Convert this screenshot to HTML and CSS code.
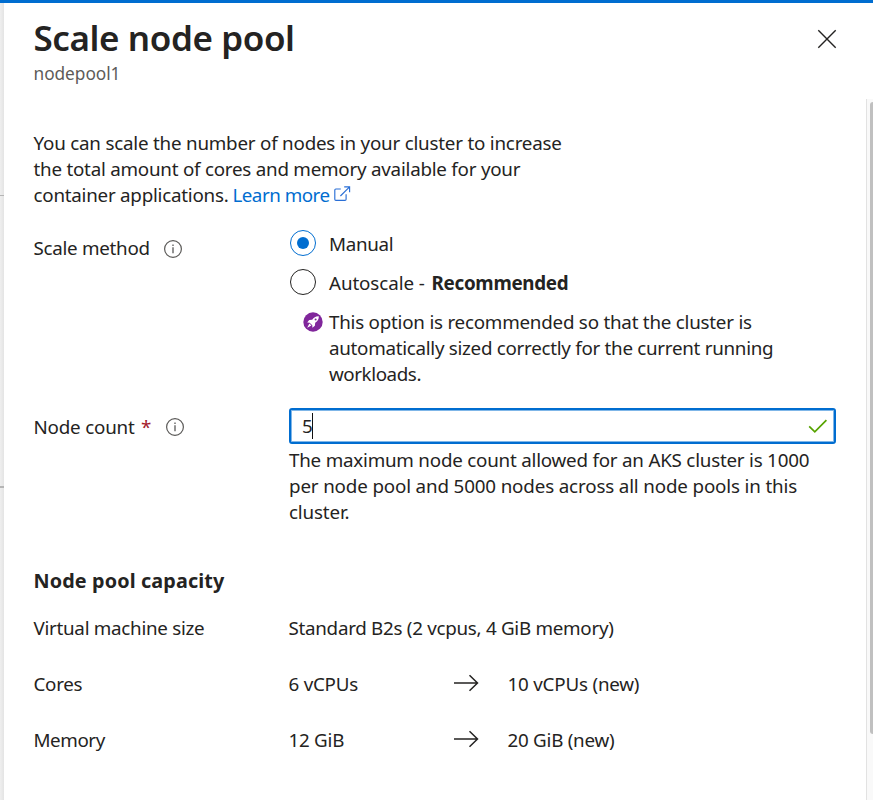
FILE: index.html
```
<!DOCTYPE html>
<html lang="en">
<head>
<meta charset="utf-8">
<title>Scale node pool</title>
<link rel="stylesheet" href="styles.css">
</head>
<body>
<div class="topbar"></div>
<div class="page">
  <div class="backdrop"><i class="rule rule-a"></i><i class="rule rule-b"></i></div>
  <main class="blade">
    <header class="head">
      <div>
        <h1>Scale node pool</h1>
        <p class="subtitle">nodepool1</p>
      </div>
      <button class="close" aria-label="Close"><svg width="20" height="20" viewBox="0 0 20 20"><path d="M1.3 1.3 18.7 18.7M18.7 1.3 1.3 18.7"/></svg></button>
    </header>
    <div class="scroller">
      <div class="content">
        <p class="intro">
          <span class="line i1">You can scale the number of nodes in your cluster to increase</span>
          <span class="line i2">the total amount of cores and memory available for your</span>
          <span class="line"><span class="i3">container applications.</span><a class="link">Learn more</a><svg class="ext" width="17" height="16" viewBox="0 0 17 16"><path d="M6.8 3H1.9Q.8 3 .8 4.1V13.2Q.8 14.3 1.9 14.3H11Q12.1 14.3 12.1 13.2V8.3M10.2.8H15.6V6.2M15.6.8 6.4 10"/></svg></span>
        </p>
        <section class="field method">
          <div class="label"><span class="t-method">Scale method</span><svg class="info" width="20" height="20" viewBox="0 0 20 20"><circle cx="10" cy="10" r="8.4"/><path d="M10 8.3V14.2"/><path class="dot" d="M10 5.6V7.1"/></svg></div>
          <div>
            <div class="option"><i class="radio checked"></i><span class="t-manual">Manual</span></div>
            <div class="option auto"><i class="radio"></i><span class="t-auto">Autoscale -</span><b>Recommended</b></div>
            <div class="hint">
              <svg class="rocket" width="20" height="20" viewBox="0 0 20 20"><circle cx="10" cy="10" r="9.7"/><path d="M15.8 4.2C12.8 4 10.9 5.4 9.2 7.8L6.2 8.1 4.2 10.6 6.7 10.7 9.3 13.3 9.4 15.8 11.9 13.8 12.2 10.8C14.6 9.1 16 7.2 15.8 4.2Z"/><path d="M6.4 11.6 8.4 13.6 4.2 15.8Z"/><circle class="port" cx="12.6" cy="7.4" r="1"/></svg>
              <div>
                <span class="line h1">This option is recommended so that the cluster is</span>
                <span class="line h2">automatically sized correctly for the current running</span>
                <span class="line h3">workloads.</span>
              </div>
            </div>
          </div>
        </section>
        <section class="field count">
          <div class="label"><span class="t-count">Node count</span><span class="star">*</span><svg class="info" width="20" height="20" viewBox="0 0 20 20"><circle cx="10" cy="10" r="8.4"/><path d="M10 8.3V14.2"/><path class="dot" d="M10 5.6V7.1"/></svg></div>
          <div>
            <div class="input"><span class="value">5</span><i class="caret"></i><svg width="20" height="16" viewBox="0 0 20 16"><path d="M1.2 8.3 6.8 13.8 18.4 2.2"/></svg></div>
            <div class="help">
              <span class="line m1">The maximum node count allowed for an AKS cluster is 1000</span>
              <span class="line m2">per node pool and 5000 nodes across all node pools in this</span>
              <span class="line m3">cluster.</span>
            </div>
          </div>
        </section>
        <h2>Node pool capacity</h2>
        <div class="capacity">
          <span class="c-vm">Virtual machine size</span><span class="wide">Standard B2s (2 vcpus, 4 GiB memory)</span>
          <span class="c-cores">Cores</span><span class="c-6">6 vCPUs</span><svg class="arrow" width="26" height="18" viewBox="0 0 26 18"><path d="M1 9H24.5M16.5 1.2 24.5 9 16.5 16.8"/></svg><span class="c-10">10 vCPUs (new)</span>
          <span class="c-memory">Memory</span><span class="c-12">12 GiB</span><svg class="arrow" width="26" height="18" viewBox="0 0 26 18"><path d="M1 9H24.5M16.5 1.2 24.5 9 16.5 16.8"/></svg><span class="c-20">20 GiB (new)</span>
        </div>
      </div>
      <div class="track"><div class="thumb"></div></div>
    </div>
  </main>
</div>
</body>
</html>
```
FILE: styles.css
```
* { box-sizing: border-box; }
body {
  margin: 0;
  height: 800px;
  overflow: hidden;
  background: #fff;
  color: #242322;
  font: 18.8px/26px "Noto Sans", "Open Sans", sans-serif;
}
h1, h2, p { margin: 0; }
svg { flex: none; fill: none; display: block; }
.topbar { height: 3px; background: #006dd0; }
.page { display: flex; height: 797px; }
.backdrop {
  flex: none;
  width: 4px;
  background: linear-gradient(90deg, #efefef, #e4e4e4);
}
.rule { display: block; background: #b5b5b5; }
.rule-a { height: 1px; margin-top: 192px; }
.rule-b { height: 2px; margin-top: 290px; }
.blade { flex: 1; display: flex; flex-direction: column; }
.head {
  display: flex;
  justify-content: space-between;
  height: 96px;
  padding: 11px 36px 0 29.5px;
}
h1 { font-size: 35px; line-height: 48px; font-weight: 600; letter-spacing: -0.408px; }
.subtitle { font-size: 17.3px; line-height: 24px; letter-spacing: -0.05px; color: #5d5b59; }
.close { width: 20px; height: 20px; margin-top: 15px; padding: 0; border: 0; background: none; }
.close path { stroke: #242322; stroke-width: 1.4; }
.scroller { flex: 1; display: flex; justify-content: space-between; }
.content { width: 802px; padding: 31px 0 0 29.5px; }
.line { display: block; white-space: nowrap; }
.i1 { letter-spacing: -0.213px; }
.i2 { letter-spacing: -0.235px; }
.i3 { letter-spacing: -0.242px; }
.intro .line:last-child { display: flex; }
.link { margin-left: 4px; letter-spacing: -0.504px; color: #006dd0; }
.ext { margin: 4px 0 0 4.5px; }
.ext path { stroke: #2a6fd6; stroke-width: 1.15; }
.field { display: grid; grid-template-columns: 255.5px 547px; }
.method { margin-top: 22px; }
.label { display: flex; white-space: nowrap; }
.method .label { padding-top: 5px; }
.t-method { width: 129.5px; letter-spacing: -0.28px; }
.info { margin-top: 3.5px; }
.info circle { stroke: #5b5a58; stroke-width: 1.2; }
.info path { stroke: #777; stroke-width: 1.6; }
.option { display: flex; height: 26px; white-space: nowrap; padding-left: 1px; }
.option > :not(.radio) { margin-top: 1px; }
.option.auto { margin-top: 13px; }
.radio {
  flex: none;
  display: grid;
  place-items: center;
  width: 26px;
  height: 26px;
  margin-right: 13px;
  border: 1.4px solid #242322;
  border-radius: 50%;
}
.radio.checked { border-color: #006dd0; }
.radio.checked::after { content: ""; width: 12px; height: 12px; border-radius: 50%; background: #006dd0; }
.t-manual { letter-spacing: -0.339px; }
.t-auto { letter-spacing: -0.096px; width: 102.5px; }
b { letter-spacing: -0.278px; }
.hint { display: flex; margin-top: 14px; padding-left: 14px; }
.rocket { margin: 2.5px 6px 0 0; }
.rocket circle { fill: #80269b; }
.rocket path { fill: #fff; }
.rocket .port { fill: #80269b; }
.h1 { letter-spacing: -0.232px; }
.h2 { letter-spacing: -0.28px; }
.h3 { letter-spacing: -0.419px; }
.count { margin-top: 21px; }
.count .label { padding-top: 6px; }
.t-count { width: 107.5px; letter-spacing: -0.2px; }
.star { width: 24px; color: #a4202a; }
.count .info { margin-top: 2.5px; }
.input {
  display: flex;
  align-items: center;
  height: 36px;
  padding: 0 6px 0 11px;
  border: 2px solid #006dd0;
  border-radius: 3px;
  box-shadow: inset 0 0 0 1px #7fb6e8;
}
.value { letter-spacing: -0.8px; }
.caret { width: 1px; height: 26px; background: #111; }
.input svg { margin-left: auto; }
.input path { stroke: #57a300; stroke-width: 1.7; }
.help { padding-top: 3px; }
.m1 { letter-spacing: -0.22px; }
.m2 { letter-spacing: -0.155px; }
.m3 { letter-spacing: -0.15px; }
h2 { margin-top: 43px; font-size: 19.8px; line-height: 26px; letter-spacing: 0.13px; }
.capacity {
  display: grid;
  grid-template-columns: 255px 164.5px 54.5px 200px;
  grid-auto-rows: 26px;
  row-gap: 30px;
  margin-top: 21px;
  white-space: nowrap;
}
.wide { grid-column: 2 / 5; letter-spacing: -0.28px; }
.arrow { margin-top: 3px; }
.arrow path { stroke: #242322; stroke-width: 1.5; }
.c-vm { letter-spacing: -0.277px; }
.c-cores { letter-spacing: -0.293px; }
.c-memory { letter-spacing: -0.42px; }
.c-6 { letter-spacing: -0.232px; }
.c-12 { letter-spacing: -0.25px; }
.c-10 { letter-spacing: -0.2px; }
.c-20 { letter-spacing: -0.25px; }
.track {
  width: 7px;
  padding: 3px 0 0 3px;
  border-left: 1px solid #e2e2e2;
  background: #f9f9f9;
}
.thumb { height: 632px; background: #c0c0c0; border-radius: 3px 0 0 3px; }
```
